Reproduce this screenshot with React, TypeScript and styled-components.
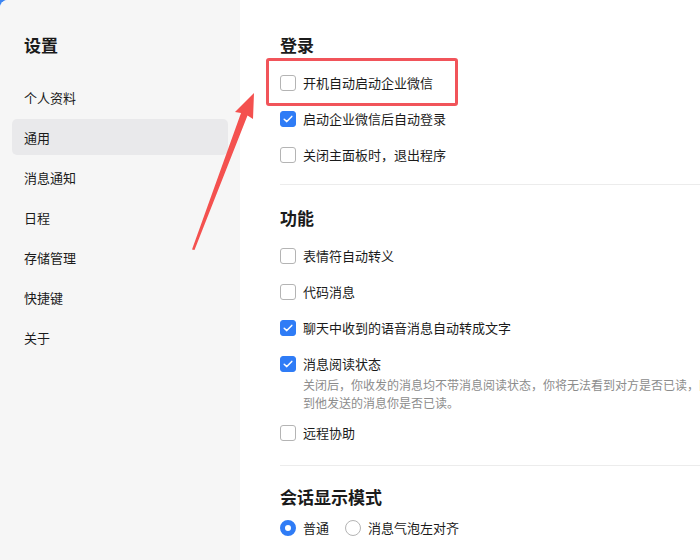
import React from "react";
import styled, { createGlobalStyle } from "styled-components";

const Global = createGlobalStyle`
  html, body { margin: 0; padding: 0; background: #3d86f2; }
  body { font-family: "Noto Sans CJK SC", "Noto Sans", sans-serif; color: #1b1b1b; }
  * { box-sizing: border-box; }
`;

const Window = styled.div`
  position: relative;
  width: 700px;
  height: 560px;
  display: flex;
  overflow: hidden;
  background: #ffffff;
  border-top-left-radius: 8px;
`;

const Sidebar = styled.nav`
  width: 240px;
  flex: none;
  background: #f6f6f6;
  padding: 33px 12px 0 12px;
  display: flex;
  flex-direction: column;
`;

const SideTitle = styled.div`
  font-size: 17px;
  font-weight: 700;
  line-height: 24px;
  padding-left: 12px;
  margin-bottom: 22px;
`;

const NavItem = styled.div<{ $active?: boolean }>`
  height: 36px;
  margin-bottom: 4px;
  padding-left: 12px;
  display: flex;
  align-items: center;
  font-size: 13px;
  border-radius: 5px;
  background: ${(p) => (p.$active ? "#e9e9eb" : "transparent")};
`;

const Main = styled.main`
  flex: 1;
  min-width: 0;
  padding: 33px 0 0 40px;
  overflow: hidden;
  display: flex;
  flex-direction: column;
`;

const Content = styled.div`
  width: 520px;
  flex: none;
`;

const SectionTitle = styled.div<{ $gap: number }>`
  font-size: 17px;
  font-weight: 700;
  line-height: 24px;
  margin-bottom: ${(p) => p.$gap}px;
`;

const Divider = styled.div<{ $top: number; $bottom: number }>`
  height: 1px;
  background: #ececec;
  margin: ${(p) => p.$top}px 0 ${(p) => p.$bottom}px 0;
`;

const Row = styled.div<{ $highlight?: boolean }>`
  position: relative;
  display: flex;
  align-items: flex-start;
  gap: 7px;
  padding: 8px 0;
  ${(p) =>
    p.$highlight
      ? `&::after {
    content: "";
    position: absolute;
    left: -14px;
    top: -7px;
    width: 186px;
    height: 42px;
    border: 3px solid #f1545a;
    border-radius: 3px;
  }`
      : ""}
`;

const RowWithDesc = styled(Row)`
  padding-bottom: 3px;
`;

const Box = styled.span<{ $checked?: boolean }>`
  width: 16px;
  height: 16px;
  flex: none;
  margin-top: 2px;
  border-radius: 3px;
  border: 1px solid ${(p) => (p.$checked ? "#2f7cf6" : "#b4b4b4")};
  background: ${(p) => (p.$checked ? "#2f7cf6" : "#ffffff")};
  display: flex;
  align-items: center;
  justify-content: center;
`;

const TextCol = styled.div`
  display: flex;
  flex-direction: column;
`;

const Label = styled.span`
  font-size: 13px;
  line-height: 20px;
`;

const Desc = styled.div`
  margin-top: 2px;
  font-size: 12px;
  line-height: 18px;
  color: #8c8c8c;
`;

const DescLine = styled.span`
  display: block;
  white-space: nowrap;
`;

const RadioGroup = styled.div`
  display: flex;
  align-items: center;
  margin-top: 1px;
  height: 36px;
`;

const RadioItem = styled.label`
  display: flex;
  align-items: center;
  gap: 7px;
  margin-right: 16px;
  font-size: 13px;
  line-height: 20px;
`;

const RadioDot = styled.span<{ $checked?: boolean }>`
  width: 16px;
  height: 16px;
  flex: none;
  border-radius: 50%;
  background: #ffffff;
  border: ${(p) => (p.$checked ? "5px solid #2f7cf6" : "1px solid #b4b4b4")};
`;

const ArrowLayer = styled.svg`
  position: absolute;
  left: 0;
  top: 0;
  pointer-events: none;
`;

const Check = () => (
  <svg width="10" height="8" viewBox="0 0 10 8" fill="none">
    <path d="M1.2 4.2 L3.8 6.6 L8.8 1.4" stroke="#fff" strokeWidth="1.5" strokeLinecap="round" strokeLinejoin="round" />
  </svg>
);

const CheckRow = ({ label, checked, highlight }: { label: string; checked?: boolean; highlight?: boolean }) => (
  <Row $highlight={highlight}>
    <Box $checked={checked}>{checked && <Check />}</Box>
    <Label>{label}</Label>
  </Row>
);

const navItems = ["个人资料", "通用", "消息通知", "日程", "存储管理", "快捷键", "关于"];

export default function App() {
  return (
    <>
      <Global />
      <Window>
        <Sidebar>
          <SideTitle>设置</SideTitle>
          {navItems.map((n) => (
            <NavItem key={n} $active={n === "通用"}>
              {n}
            </NavItem>
          ))}
        </Sidebar>
        <Main>
          <Content>
            <SectionTitle $gap={8}>登录</SectionTitle>
            <CheckRow label="开机自动启动企业微信" highlight />
            <CheckRow label="启动企业微信后自动登录" checked />
            <CheckRow label="关闭主面板时，退出程序" />
            <Divider $top={11} $bottom={21} />
            <SectionTitle $gap={8}>功能</SectionTitle>
            <CheckRow label="表情符自动转义" />
            <CheckRow label="代码消息" />
            <CheckRow label="聊天中收到的语音消息自动转成文字" checked />
            <RowWithDesc>
              <Box $checked>
                <Check />
              </Box>
              <TextCol>
                <Label>消息阅读状态</Label>
                <Desc>
                  <DescLine>关闭后，你收发的消息均不带消息阅读状态，你将无法看到对方是否已读，同时对方也无法看</DescLine>
                  <DescLine>到他发送的消息你是否已读。</DescLine>
                </Desc>
              </TextCol>
            </RowWithDesc>
            <CheckRow label="远程协助" />
            <Divider $top={14} $bottom={19} />
            <SectionTitle $gap={1}>会话显示模式</SectionTitle>
            <RadioGroup>
              <RadioItem>
                <RadioDot $checked />
                普通
              </RadioItem>
              <RadioItem>
                <RadioDot />
                消息气泡左对齐
              </RadioItem>
            </RadioGroup>
          </Content>
        </Main>
        <ArrowLayer width="700" height="560" viewBox="0 0 700 560">
          <polygon
            points="254,93 253,119 247.5,115.5 194.5,250 192,249.5 241,113 235,112"
            fill="#f4514f"
          />
        </ArrowLayer>
      </Window>
    </>
  );
}
